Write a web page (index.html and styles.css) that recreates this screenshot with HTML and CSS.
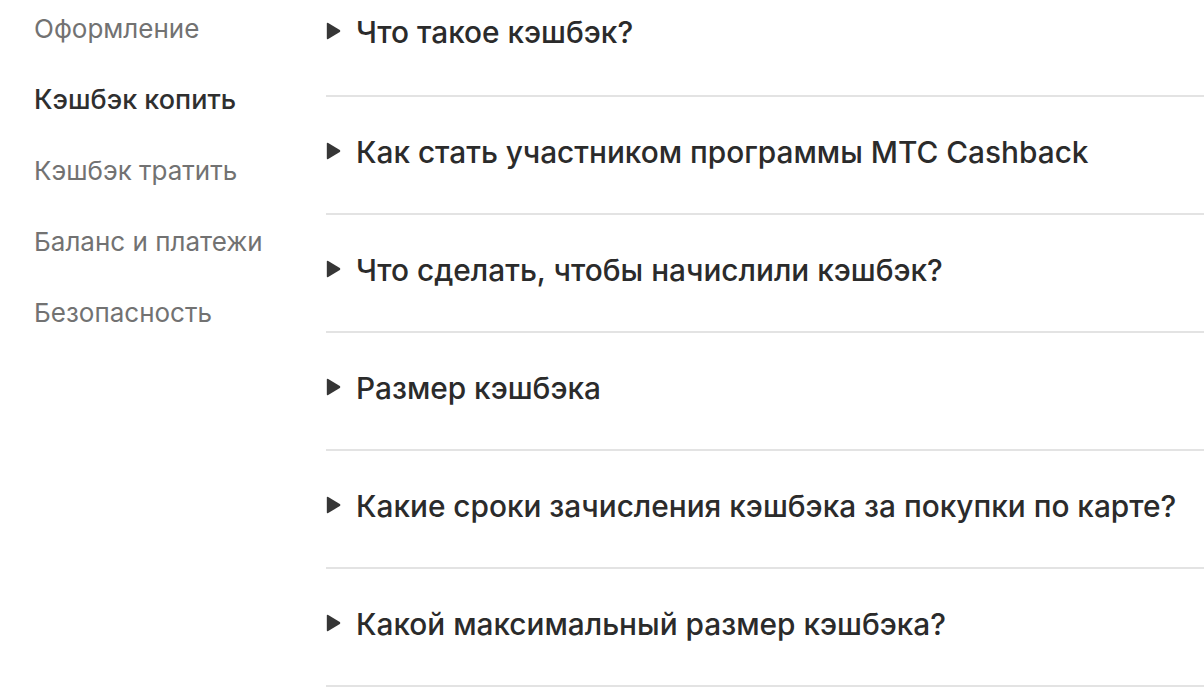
FILE: index.html
```html
<!DOCTYPE html>
<html lang="ru">
<head>
<meta charset="utf-8">
<title>FAQ</title>
<link rel="stylesheet" href="styles.css">
</head>
<body>
<div class="page">
  <nav class="nav">
    <a class="nav-item">Оформление</a>
    <a class="nav-item active">Кэшбэк копить</a>
    <a class="nav-item">Кэшбэк тратить</a>
    <a class="nav-item">Баланс и платежи</a>
    <a class="nav-item">Безопасность</a>
  </nav>
  <main class="faq">
    <details class="q"><summary><svg class="arrow" viewBox="0 0 15 18" width="15" height="18"><path d="M0.8 1.8 Q0.8 0.3 2.2 1 L13.8 7.9 Q15 9 13.8 10.1 L2.2 17 Q0.8 17.7 0.8 16.2 Z"/></svg><span>Что такое кэшбэк?</span></summary></details>
    <details class="q"><summary><svg class="arrow" viewBox="0 0 15 18" width="15" height="18"><path d="M0.8 1.8 Q0.8 0.3 2.2 1 L13.8 7.9 Q15 9 13.8 10.1 L2.2 17 Q0.8 17.7 0.8 16.2 Z"/></svg><span>Как стать участником программы МТС Cashback</span></summary></details>
    <details class="q"><summary><svg class="arrow" viewBox="0 0 15 18" width="15" height="18"><path d="M0.8 1.8 Q0.8 0.3 2.2 1 L13.8 7.9 Q15 9 13.8 10.1 L2.2 17 Q0.8 17.7 0.8 16.2 Z"/></svg><span>Что сделать, чтобы начислили кэшбэк?</span></summary></details>
    <details class="q"><summary><svg class="arrow" viewBox="0 0 15 18" width="15" height="18"><path d="M0.8 1.8 Q0.8 0.3 2.2 1 L13.8 7.9 Q15 9 13.8 10.1 L2.2 17 Q0.8 17.7 0.8 16.2 Z"/></svg><span>Размер кэшбэка</span></summary></details>
    <details class="q"><summary><svg class="arrow" viewBox="0 0 15 18" width="15" height="18"><path d="M0.8 1.8 Q0.8 0.3 2.2 1 L13.8 7.9 Q15 9 13.8 10.1 L2.2 17 Q0.8 17.7 0.8 16.2 Z"/></svg><span>Какие сроки зачисления кэшбэка за покупки по карте?</span></summary></details>
    <details class="q"><summary><svg class="arrow" viewBox="0 0 15 18" width="15" height="18"><path d="M0.8 1.8 Q0.8 0.3 2.2 1 L13.8 7.9 Q15 9 13.8 10.1 L2.2 17 Q0.8 17.7 0.8 16.2 Z"/></svg><span>Какой максимальный размер кэшбэка?</span></summary></details>
  </main>
</div>
</body>
</html>
```

FILE: styles.css
```css
html, body {
  margin: 0;
  padding: 0;
  background: #ffffff;
}

body {
  font-family: Inter, "Noto Sans", sans-serif;
  overflow: hidden;
}

.page {
  display: flex;
  align-items: flex-start;
}

.nav {
  box-sizing: border-box;
  width: 326px;
  flex: none;
  padding: 11px 0 0 34px;
  display: flex;
  flex-direction: column;
  gap: 35px;
}

.nav-item {
  font-size: 26px;
  line-height: 36px;
  color: #727272;
  font-weight: 400;
}

.nav-item.active {
  font-size: 27px;
  color: #2f2f2f;
  font-weight: 500;
}

.faq {
  flex: 1;
  display: flex;
  flex-direction: column;
}

.q {
  border-bottom: 2px solid #e3e3e3;
  height: 116px;
}

.q:first-child {
  height: 95px;
}

.q summary {
  list-style: none;
  display: flex;
  align-items: center;
  gap: 15px;
  padding-top: 35px;
  font-size: 29.8px;
  line-height: 40px;
  font-weight: 500;
  color: #2b2b2b;
  cursor: pointer;
}

.q summary::-webkit-details-marker {
  display: none;
}

.q:first-child summary {
  padding-top: 12px;
}

.arrow {
  flex: none;
  display: block;
  fill: #363636;
  margin-top: -3px;
}
```
